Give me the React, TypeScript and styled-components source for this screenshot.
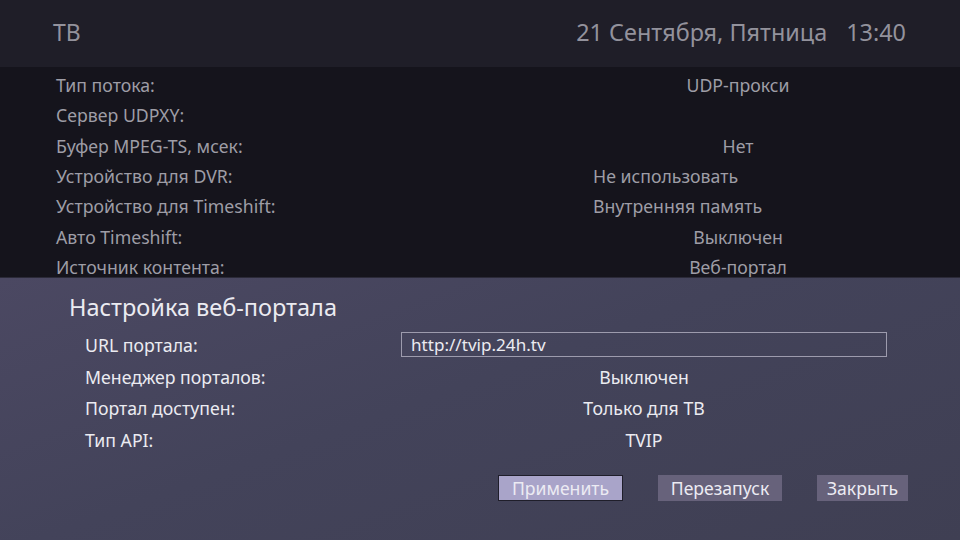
import React from 'react';
import styled, { createGlobalStyle } from 'styled-components';

type Setting = {
  label: string;
  value?: string;
  align?: 'left' | 'center';
};

const SETTINGS: Setting[] = [
  { label: 'Тип потока:', value: 'UDP-прокси' },
  { label: 'Сервер UDPXY:' },
  { label: 'Буфер MPEG-TS, мсек:', value: 'Нет' },
  { label: 'Устройство для DVR:', value: 'Не использовать', align: 'left' },
  { label: 'Устройство для Timeshift:', value: 'Внутренняя память', align: 'left' },
  { label: 'Авто Timeshift:', value: 'Выключен' },
  { label: 'Источник контента:', value: 'Веб-портал' },
];

const PORTAL = [
  { label: 'Менеджер порталов:', value: 'Выключен' },
  { label: 'Портал доступен:', value: 'Только для ТВ' },
  { label: 'Тип API:', value: 'TVIP' },
];

const GlobalStyle = createGlobalStyle`
  html, body {
    margin: 0;
    padding: 0;
    background: #15141c;
  }
  body {
    font-family: "Noto Sans", "Open Sans", sans-serif;
  }
`;

function App() {
  return (
    <>
      <GlobalStyle />
      <Screen>
        <Header>
          <Title>ТВ</Title>
          <Clock>
            <span>21 Сентября, Пятница</span>
            <span>13:40</span>
          </Clock>
        </Header>

        <SettingsList>
          {SETTINGS.map((s) => (
            <Row key={s.label}>
              <Label>{s.label}</Label>
              <Value $align={s.align || 'center'}>{s.value}</Value>
            </Row>
          ))}
        </SettingsList>

        <Dialog>
          <DialogTitle>Настройка веб-портала</DialogTitle>
          <DialogRow>
            <DialogLabel>URL портала:</DialogLabel>
            <UrlField>http://tvip.24h.tv</UrlField>
          </DialogRow>
          {PORTAL.map((p) => (
            <DialogRow key={p.label}>
              <DialogLabel>{p.label}</DialogLabel>
              <DialogValue>{p.value}</DialogValue>
            </DialogRow>
          ))}
          <Buttons>
            <Button $active $width={125}>Применить</Button>
            <Button $width={124}>Перезапуск</Button>
            <Button $width={91}>Закрыть</Button>
          </Buttons>
        </Dialog>
      </Screen>
    </>
  );
}

const Screen = styled.div`
  width: 960px;
  height: 540px;
  display: flex;
  flex-direction: column;
  overflow: hidden;
  background: #15141c;
`;

const Header = styled.header`
  height: 67px;
  flex-shrink: 0;
  display: flex;
  align-items: center;
  justify-content: space-between;
  padding: 0 54px 3px 53px;
  box-sizing: border-box;
  background: #1f1e28;
  color: #93929c;
`;

const Title = styled.div`
  font-size: 23px;
`;

const Clock = styled.div`
  display: flex;
  gap: 19px;
  font-size: 23.4px;
`;

const SettingsList = styled.div`
  height: 210px;
  flex-shrink: 0;
  overflow: hidden;
  padding-top: 3px;
  box-sizing: border-box;
`;

const Row = styled.div`
  display: grid;
  grid-template-columns: 537px 290px;
  padding-left: 56px;
  height: 30.33px;
  line-height: 30.33px;
  font-size: 17.7px;
  color: #9e9da6;
`;

const Label = styled.div`
  white-space: nowrap;
`;

const Value = styled.div<{ $align: 'left' | 'center' }>`
  text-align: ${(p) => p.$align};
  white-space: nowrap;
`;

const Dialog = styled.section`
  flex: 1;
  border-top: 1px solid #2b2a38;
  background: linear-gradient(160deg, #4b4862 0%, #43435a 45%, #3f3f53 100%);
  padding: 13px 52px 0 69px;
  box-sizing: border-box;
  color: #ebebf1;
`;

const DialogTitle = styled.div`
  font-size: 23.5px;
  height: 38px;
  line-height: 32px;
`;

const DialogRow = styled.div`
  display: grid;
  grid-template-columns: 316px 486px;
  padding-left: 16px;
  height: 31.7px;
  align-items: center;
  font-size: 17.7px;
  white-space: nowrap;
`;

const DialogLabel = styled.div``;

const DialogValue = styled.div`
  text-align: center;
`;

const UrlField = styled.div`
  height: 25px;
  line-height: 23px;
  font-size: 17.1px;
  border: 1px solid #9d9bad;
  box-sizing: border-box;
  padding-left: 9px;
`;

const Buttons = styled.div`
  display: flex;
  justify-content: flex-end;
  gap: 35px;
  margin-top: 19px;
`;

const Button = styled.button<{ $active?: boolean; $width: number }>`
  width: ${(p) => p.$width}px;
  height: 26px;
  padding: 0;
  font-family: inherit;
  font-size: 17.6px;
  line-height: 24px;
  color: #ecebf3;
  background: ${(p) => (p.$active ? '#a9a4c9' : '#67627b')};
  border: 1px solid ${(p) => (p.$active ? '#1f1e2a' : '#67627b')};
  box-sizing: border-box;
`;

export default App;
